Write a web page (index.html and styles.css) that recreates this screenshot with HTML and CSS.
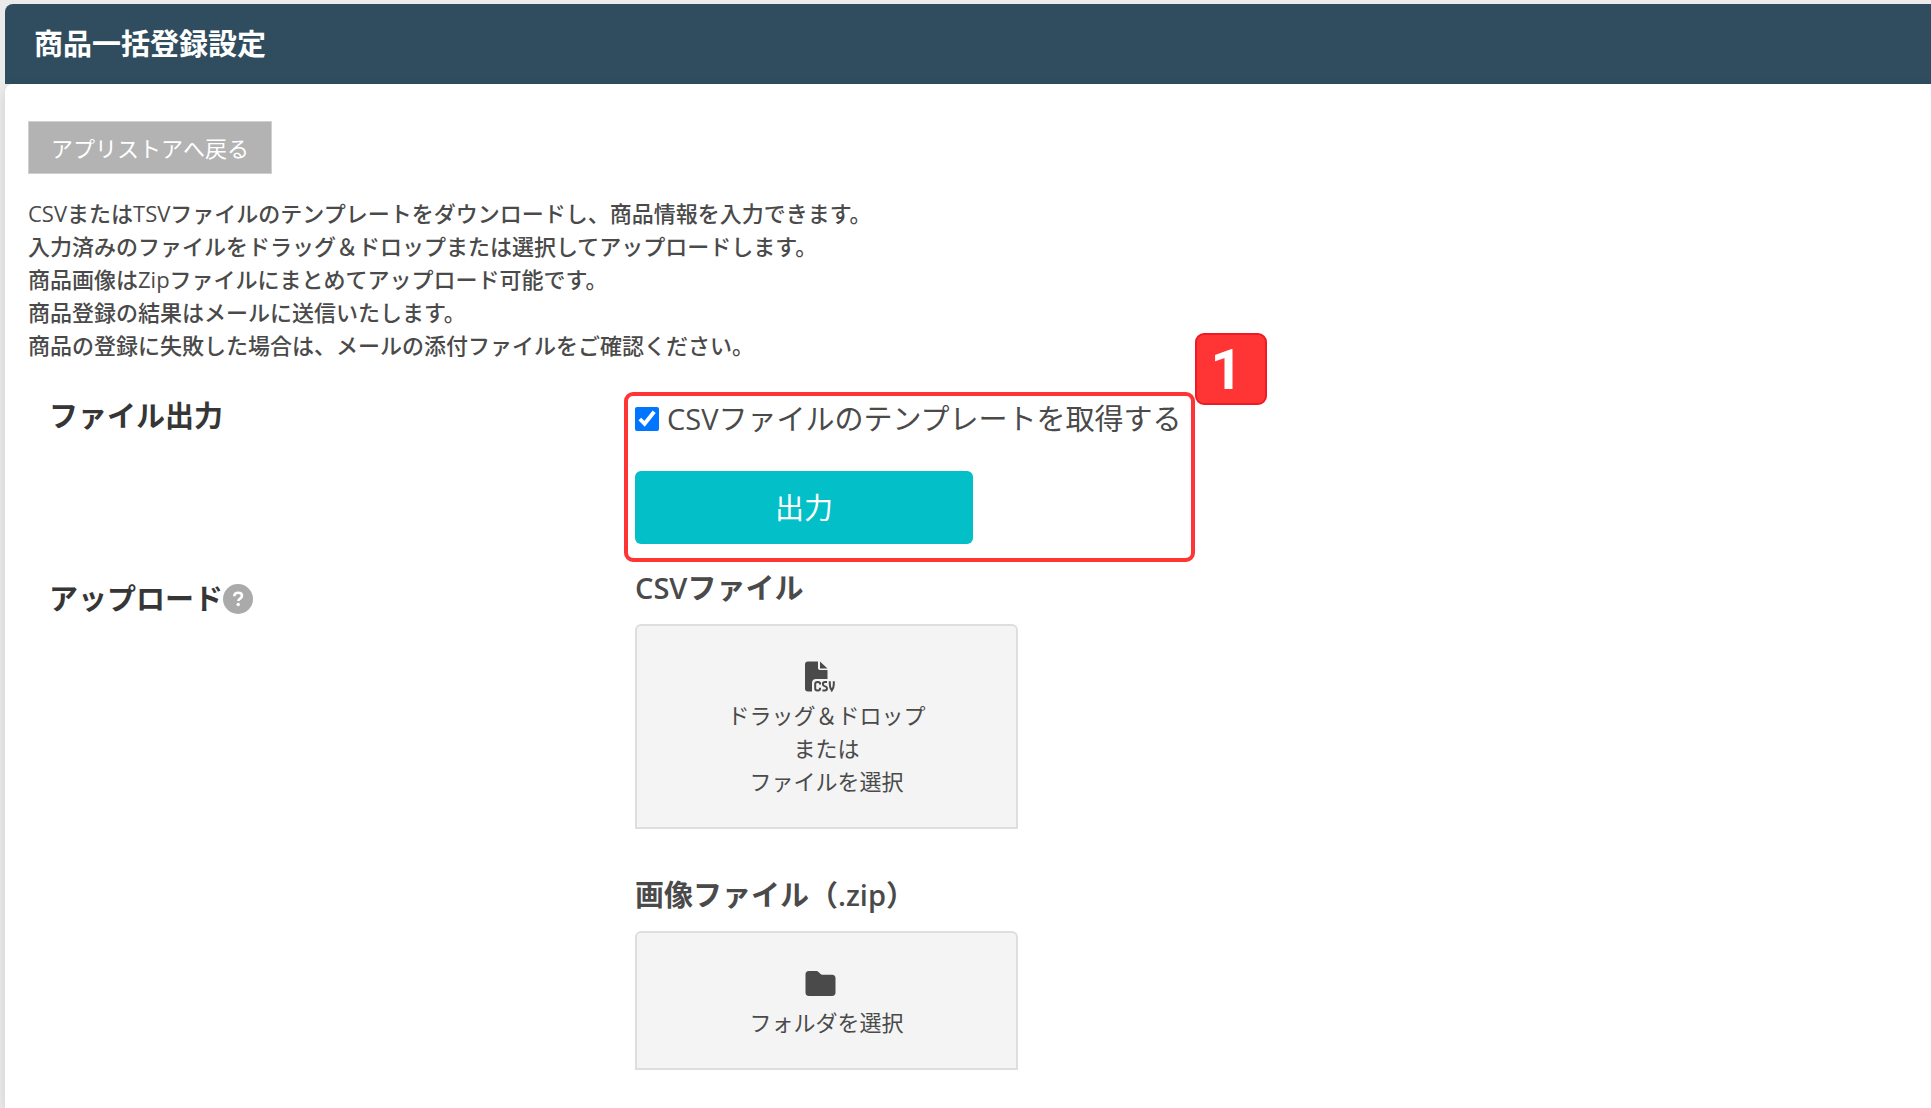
FILE: index.html
```html
<!DOCTYPE html>
<html lang="ja">
<head>
  <meta charset="UTF-8">
  <title>商品一括登録設定</title>
  <link rel="stylesheet" href="styles.css">
</head>
<body>
  <header class="page-header">
    <h1>商品一括登録設定</h1>
  </header>

  <main class="panel">
    <button type="button" class="back-button">アプリストアへ戻る</button>

    <p class="intro">
      CSVまたはTSVファイルのテンプレートをダウンロードし、商品情報を入力できます。<br>
      入力済みのファイルをドラッグ＆ドロップまたは選択してアップロードします。<br>
      商品画像はZipファイルにまとめてアップロード可能です。<br>
      商品登録の結果はメールに送信いたします。<br>
      商品の登録に失敗した場合は、メールの添付ファイルをご確認ください。
    </p>

    <section class="row">
      <h2 class="row-title">ファイル出力</h2>
      <div class="row-body">
        <div class="step">
          <span class="step-number">1</span>
          <label class="check-label" for="template">
            <input type="checkbox" id="template" checked>
            <span>CSVファイルのテンプレートを取得する</span>
          </label>
          <button type="button" class="output-button">出力</button>
        </div>
      </div>
    </section>

    <section class="row row-upload">
      <h2 class="row-title">アップロード<svg class="help" viewBox="0 0 30 30" role="img" aria-label="ヘルプ">
          <circle cx="15" cy="15" r="15" fill="#aaa"/>
          <path d="M11.2 12.2c.1-2.2 1.6-3.5 3.9-3.5 2.2 0 3.9 1.2 3.9 3.1 0 2.9-3.7 2.6-3.7 5.2" fill="none" stroke="#fff" stroke-width="2.6"/>
          <circle cx="15.2" cy="20.5" r="1.7" fill="#fff"/>
        </svg></h2>
      <div class="row-body">
        <h3 class="file-title">CSVファイル</h3>
        <label class="dropzone" for="csv-file">
          <svg class="icon" viewBox="0 0 31 30" aria-hidden="true">
            <path fill="#4a4a4a" d="M3 0h10v6.500c0 1.200.8 2 2 2h7.500v9H11c-2.500 0-4 1.500-4 4V30H3c-2 0-3-1-3-3V3c0-2 1-3 3-3zM15 0l7.500 7H15z"/>
            <g fill="none" stroke="#4a4a4a" stroke-width="2">
              <path d="M15 23v-1c0-1-.7-1.500-2-1.500h-.5c-1.500 0-2.300.8-2.300 2V27c0 1.200.8 2 2.300 2h.5c1.300 0 2-.6 2-1.700v-1"/>
              <path d="M22 20.600h-2c-2.800 0-2.800 3.300-.4 4 3.200.8 3.200 4.400 0 4.400h-2.200"/>
              <path d="M24.800 19.800v3c0 2.500.7 4.500 2 6.200 1.300-1.700 2-3.700 2-6.200v-3"/>
            </g>
          </svg>
          <span>ドラッグ＆ドロップ<br>または<br>ファイルを選択</span>
          <input type="file" id="csv-file" accept=".csv,.tsv">
        </label>

        <h3 class="file-title">画像ファイル（.zip）</h3>
        <label class="dropzone" for="zip-file">
          <svg class="icon" viewBox="0 0 31 30" aria-hidden="true">
            <path fill="#4a4a4a" d="M4 2.500h7c1.200 0 2 .4 2.800 1.200l1.500 1.600c.6.600 1.200.9 2 .9H27c2.300 0 3.500 1.200 3.500 3.500V24c0 2.300-1.200 3.500-3.500 3.500H4c-2.300 0-3.500-1.200-3.500-3.500V6c0-2.300 1.200-3.500 3.500-3.500z"/>
          </svg>
          <span>フォルダを選択</span>
          <input type="file" id="zip-file" accept=".zip">
        </label>
      </div>
    </section>
  </main>
</body>
</html>
```
FILE: styles.css
```css
* {
  box-sizing: border-box;
}
body {
  margin: 0;
  padding: 4px 0 0 5px;
  min-height: 100vh;
  display: flex;
  flex-direction: column;
  background-color: #ebebeb;
  color: #4a4a4a;
  font-family: "Open Sans", "Noto Sans CJK JP", sans-serif;
  font-size: 22px;
  line-height: 33px;
}
h1, h2, h3, p {
  margin: 0;
}
button {
  font-family: inherit;
  cursor: pointer;
}
.page-header {
  height: 80px;
  padding: 0 29px 2px;
  display: flex;
  align-items: center;
  background-color: #2f4d5f;
  border-top-left-radius: 8px;
  color: #fff;
}
.page-header h1 {
  font-size: 29px;
}
.panel {
  flex: 1;
  padding: 37px 6px 38px 23px;
  background-color: #fff;
  border-top-left-radius: 8px;
  box-shadow: 0 4px 12px rgba(0, 0, 0, 0.12);
}
.back-button {
  height: 53px;
  padding: 0 22px 2px;
  background-color: #b3b3b3;
  border: 1px solid #d0d0d0;
  color: #fff;
  font-size: 22px;
}
.intro {
  margin-top: 23px;
  font-weight: 500;
}
.row {
  display: flex;
  margin-top: 30px;
}
.row-upload {
  margin-top: 4px;
}
.row-title {
  flex: 0 0 32%;
  padding: 2px 0 0 21px;
  display: flex;
  align-items: center;
  align-self: flex-start;
  color: #363636;
  font-size: 29px;
  line-height: 44px;
}
.row-upload .row-title {
  padding-top: 11px;
}
.help {
  width: 30px;
  height: 30px;
}

/* numbered outline around the export step */
.step {
  position: relative;
  margin-left: -11px;
  padding: 2px 9px 14px 7px;
  border: 4px solid #ff3535;
  border-radius: 9px;
}
.step-number {
  position: absolute;
  left: calc(100% + 4px);
  top: -63px;
  width: 72px;
  height: 72px;
  padding-right: 8px;
  background-color: #ff3535;
  border: 2px solid #ec1c24;
  border-radius: 9px;
  color: #fff;
  font-family: Roboto, sans-serif;
  font-size: 56px;
  font-weight: bold;
  line-height: 70px;
  text-align: center;
}
.check-label {
  display: flex;
  align-items: center;
  gap: 8px;
  font-size: 29px;
  line-height: 42px;
}
.check-label input {
  width: 24px;
  height: 24px;
  margin: 0;
  accent-color: #0075ff;
}
.output-button {
  width: 338px;
  height: 73px;
  margin-top: 31px;
  padding: 0 0 4px;
  background-color: #03bfc7;
  border: 0;
  border-radius: 6px;
  color: #fff;
  font-size: 29px;
}

.file-title {
  margin-bottom: 14px;
  font-size: 29px;
  font-weight: 600;
  line-height: 44px;
}
.dropzone {
  width: 383px;
  padding: 34px 0 29px;
  display: flex;
  flex-direction: column;
  align-items: center;
  gap: 6px;
  background-color: #f4f4f4;
  border: 2px solid #dedede;
  border-radius: 6px 6px 0 0;
  text-align: center;
  cursor: pointer;
}
.dropzone + .file-title {
  margin-top: 44px;
}
.dropzone input {
  display: none;
}
.icon {
  width: 31px;
  height: 33px;
  margin-right: 12px;
}
```
